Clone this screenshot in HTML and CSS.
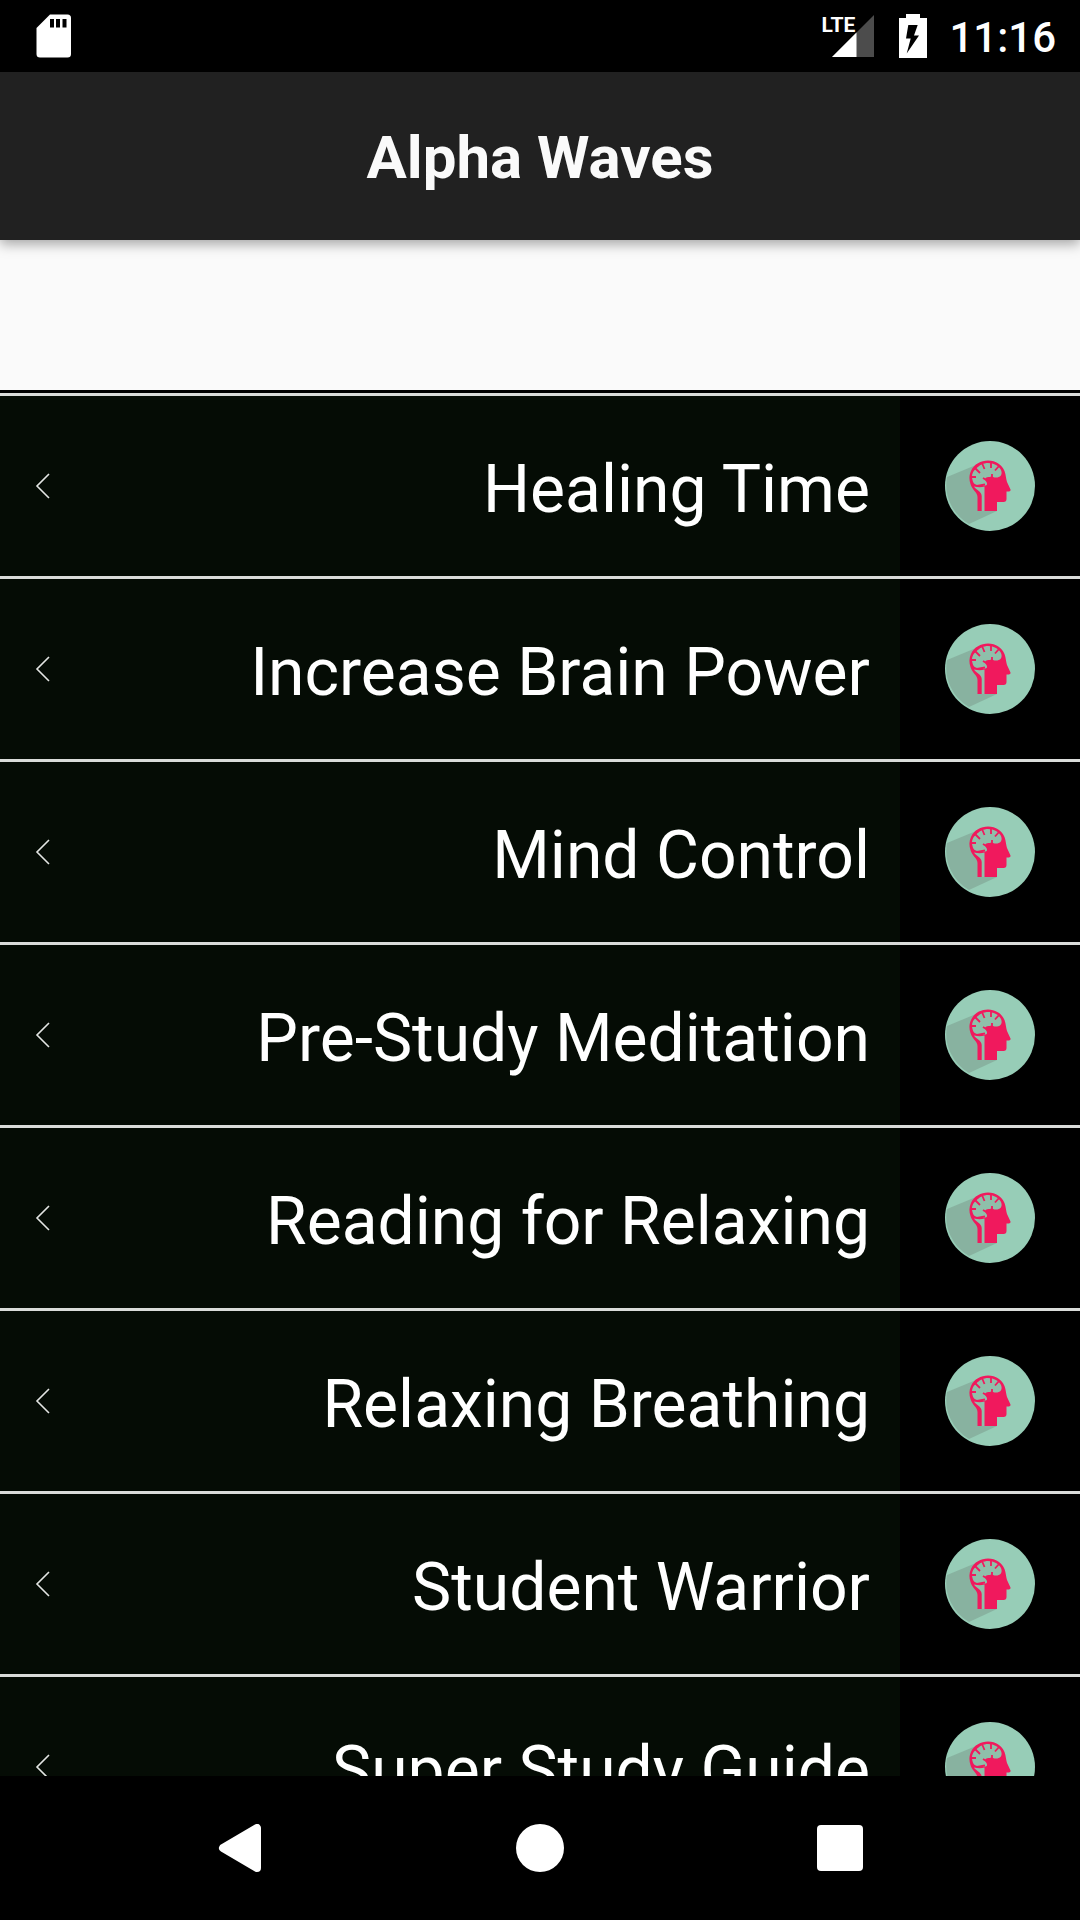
FILE: index.html
```html
<!doctype html>
<html lang="en">
<head>
	<meta charset="UTF-8">
	<meta name="viewport" content="width=device-width, initial-scale=1.0">
	<title>Alpha Waves</title>
	<link rel="stylesheet" href="styles.css">
</head>
<body>
<!-- shared icons -->
<svg class="defs" aria-hidden="true">
	<symbol id="chevron" viewBox="0 0 18 30">
		<path d="M15 3L3 15l12 12" fill="none" stroke="#e4e6e4" stroke-width="1.6"/>
	</symbol>
	<symbol id="head" viewBox="0 0 90 90">
		<circle cx="45" cy="45" r="45" fill="#97cdb7"/>
		<path d="M2 36L31 24L52 70L24 83A45 45 0 0 1 2 36z" fill="#88b2a0"/>
		<path d="M32.500 70V56C32.500 51 27 49 25.500 43C24 39 24 34 26 30C29 23 36 19.500 43 19.500C51 19.500 57 24 59.500 30C61 34 61 38 62 41L65.500 48.500Q66 50 64 50.500H61.500V58Q61.500 61 58.500 61H52V70z" fill="#f0195d"/>
		<path d="M27.500 39C26 34 28 30 31 28C34 24 39 22 43 22C49 22 54 25 56 29C58 34 55 36.500 51 36.500C48 36.500 46 34.500 45 36C43 36 41 36 40 38C40 40 42.500 41 42 43.500C40 46 36 44.500 34 44C30 44 28 42 27.500 39z" fill="#8fbfaa"/>
		<path d="M29 45.500Q35 47 39.500 45.500V70H36.700V55C36.500 50 31 49 29 45.500z" fill="#8fbfaa"/>
		<path d="M26 36h5M30 27l5 5M37 22l2.500 6M46 21v6M54 25l-4 4.500M47 38v-5M32 45l8-1.500M38 37l5 3" fill="none" stroke="#f0195d" stroke-width="1.8"/>
	</symbol>
</svg>

<div class="status">
	<svg class="sd" viewBox="0 0 36 44">
		<path d="M14 .5H31.500Q35 .5 35 4V40Q35 43.500 31.500 43.500H4Q.5 43.500 .5 40V14z" fill="#fff"/>
		<path d="M14 5h4v8.500h-4zM20 5h4v8.500h-4zM26.500 5h4v8.500h-4z" fill="#000"/>
	</svg>
	<div class="signal">
		<span class="lte">LTE</span>
		<svg viewBox="0 0 42 42">
			<path d="M42 0V42H0z" fill="#4c4c4c"/>
			<path d="M24.500 17.500V42H0z" fill="#fff"/>
		</svg>
	</div>
	<svg class="battery" viewBox="0 0 28 44">
		<path d="M7 0h14v4h7v40H0V4h7z" fill="#fff"/>
		<path d="M9.300 11h9.400L15 21.500h5L7.700 39.500L11.700 24.500H7z" fill="#000"/>
	</svg>
	<span class="time">11:16</span>
</div>

<header class="header">
	<h1>Alpha Waves</h1>
</header>

<main class="content">
	<ul class="list">
		<li><a href="#" class="row">
			<span class="label"><svg class="chevron"><use href="#chevron"/></svg><span class="name">Healing Time</span></span>
			<svg class="head"><use href="#head"/></svg>
		</a></li>
		<li><a href="#" class="row">
			<span class="label"><svg class="chevron"><use href="#chevron"/></svg><span class="name">Increase Brain Power</span></span>
			<svg class="head"><use href="#head"/></svg>
		</a></li>
		<li><a href="#" class="row">
			<span class="label"><svg class="chevron"><use href="#chevron"/></svg><span class="name">Mind Control</span></span>
			<svg class="head"><use href="#head"/></svg>
		</a></li>
		<li><a href="#" class="row">
			<span class="label"><svg class="chevron"><use href="#chevron"/></svg><span class="name">Pre-Study Meditation</span></span>
			<svg class="head"><use href="#head"/></svg>
		</a></li>
		<li><a href="#" class="row">
			<span class="label"><svg class="chevron"><use href="#chevron"/></svg><span class="name">Reading for Relaxing</span></span>
			<svg class="head"><use href="#head"/></svg>
		</a></li>
		<li><a href="#" class="row">
			<span class="label"><svg class="chevron"><use href="#chevron"/></svg><span class="name">Relaxing Breathing</span></span>
			<svg class="head"><use href="#head"/></svg>
		</a></li>
		<li><a href="#" class="row">
			<span class="label"><svg class="chevron"><use href="#chevron"/></svg><span class="name">Student Warrior</span></span>
			<svg class="head"><use href="#head"/></svg>
		</a></li>
		<li><a href="#" class="row">
			<span class="label"><svg class="chevron"><use href="#chevron"/></svg><span class="name">Super Study Guide</span></span>
			<svg class="head"><use href="#head"/></svg>
		</a></li>
	</ul>
</main>

<nav class="nav">
	<button type="button" aria-label="Back">
		<svg viewBox="0 0 48 48"><path d="M7 24L41 4V44z" fill="#fff" stroke="#fff" stroke-width="8" stroke-linejoin="round"/></svg>
	</button>
	<button type="button" aria-label="Home">
		<svg viewBox="0 0 48 48"><circle cx="24" cy="24" r="24" fill="#fff"/></svg>
	</button>
	<button type="button" aria-label="Recent apps">
		<svg viewBox="0 0 48 48"><rect x="1" y="1" width="46" height="46" rx="4" fill="#fff"/></svg>
	</button>
</nav>
</body>
</html>
```

FILE: styles.css
```css
*
{
	box-sizing: border-box;
}

body
{
	margin: 0;
	height: 100vh;
	display: flex;
	flex-direction: column;
	background-color: #fafafa;
	font-family: Roboto, "Liberation Sans", sans-serif;
}

svg
{
	display: block;
	flex: none;
}

.defs
{
	position: absolute;
	width: 0;
	height: 0;
}

.status
{
	flex: none;
	display: flex;
	align-items: center;
	height: 72px;
	padding: 0 24px 0 36px;
	background-color: #000;
	color: #fff;
}

.sd
{
	width: 36px;
	height: 44px;
	margin-right: auto;
}

.signal
{
	position: relative;
	padding-left: 11px;
	margin-right: 25px;
}

.signal svg
{
	width: 42px;
	height: 42px;
}

.lte
{
	position: absolute;
	left: 0;
	top: 0;
	font-size: 21px;
	font-weight: bold;
	line-height: 20px;
}

.battery
{
	width: 28px;
	height: 44px;
	margin-right: 22px;
}

.time
{
	padding-top: 4px;
	font-size: 42px;
	font-weight: 500;
	line-height: 48px;
}

.header
{
	flex: none;
	position: relative;
	display: flex;
	align-items: center;
	justify-content: center;
	height: 168px;
	padding-top: 4px;
	background-color: #212121;
	box-shadow: 0 4px 12px rgba(0, 0, 0, .35);
}

.header h1
{
	margin: 0;
	color: #fafafa;
	font-size: 60px;
	font-weight: bold;
	line-height: 72px;
}

.content
{
	flex: 1;
	min-height: 0;
	padding-top: 150px;
	overflow-y: auto;
	scrollbar-width: none;
}

.list
{
	margin: 0;
	padding: 0;
	list-style: none;
	border-top: 3px solid #000;
}

.list li
{
	border-top: 3px solid #dadcda;
}

.row
{
	display: flex;
	align-items: center;
	height: 180px;
	padding-right: 45px;
	gap: 45px;
	background-color: #000;
	color: #fff;
	text-decoration: none;
}

.label
{
	flex: 1;
	align-self: stretch;
	display: flex;
	align-items: center;
	justify-content: space-between;
	padding: 0 30px 0 34px;
	background-color: #050c05;
}

.chevron
{
	width: 18px;
	height: 30px;
}

.name
{
	padding-top: 8px;
	font-size: 66px;
	line-height: 78px;
}

.head
{
	width: 90px;
	height: 90px;
}

.nav
{
	flex: none;
	display: flex;
	height: 144px;
	padding: 0 90px;
	background-color: #000;
}

.nav button
{
	flex: 1;
	display: flex;
	align-items: center;
	justify-content: center;
	padding: 0;
	border: 0;
	background: none;
}

.nav svg
{
	width: 48px;
	height: 48px;
}
```
